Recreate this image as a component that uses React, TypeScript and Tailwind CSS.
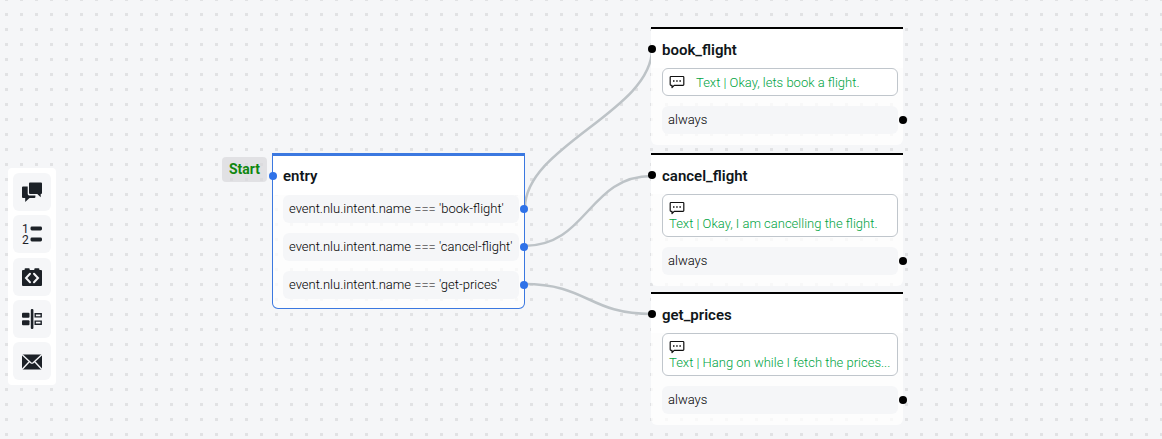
import React from 'react';

type Tone = 'black' | 'blue';
type Side = 'in' | 'out';

function Port({ tone, side }: { tone: Tone; side: Side }) {
  const color = tone === 'blue' ? 'bg-[#2f72e8]' : 'bg-black';
  const inPlace = tone === 'blue' ? '-left-1 top-4' : '-left-[3px] top-4';
  const place = side === 'in' ? inPlace : '-right-[9px] top-2.5';
  return <span aria-hidden="true" className={`absolute size-2 rounded-full ${color} ${place}`} />;
}

function Transition({ label, tone }: { label: string; tone: Tone }) {
  return (
    <li className="relative h-7 rounded-md bg-[#f5f6f8] px-1.5 text-[13px] leading-7 font-light whitespace-nowrap text-black">
      {label}
      <Port tone={tone} side="out" />
    </li>
  );
}

function SpeechIcon() {
  return (
    <svg width="16" height="14" viewBox="0 0 16 14" fill="none" className="shrink-0" aria-hidden="true">
      <path
        d="M2 1.500h12q.8 0 .8.8v7.200q0 .8-.8.8H5.200L3 12.600v-2.300H2q-.8 0-.8-.8V2.300q0-.8.8-.8Z"
        stroke="#111"
        strokeWidth="1.200"
        strokeLinejoin="round"
      />
      <path d="M4 5.200h1.500v1.500H4zM7.200 5.200h1.500v1.500H7.200zM10.400 5.200h1.500v1.500h-1.500z" fill="#111" />
    </svg>
  );
}

function Message({ text, stacked }: { text: string; stacked: boolean }) {
  return (
    <div
      className={
        stacked
          ? 'flex h-[43px] flex-col gap-px rounded-md border border-[#c0c6cc] bg-white px-1.5 pt-1.5'
          : 'flex h-7 gap-[11px] rounded-md border border-[#c0c6cc] bg-white px-1.5 pt-1.5'
      }
    >
      <SpeechIcon />
      <span className="text-[13px] leading-4 font-light whitespace-nowrap text-[#00a342]">{text}</span>
    </div>
  );
}

function StepNode({ title, text, stacked, place }: { title: string; text: string; stacked: boolean; place: string }) {
  return (
    <section className={`absolute left-[651px] w-[252px] rounded-b-md border-t-2 border-black bg-white/75 ${place}`}>
      <h2 className="h-[39px] bg-white px-[11px] pt-[11px] text-[15px] leading-5 font-semibold text-[#10161a]">
        {title}
      </h2>
      <Port tone="black" side="in" />
      <div className="flex flex-col gap-2.5 pr-[5px] pb-[11px] pl-[11px]">
        <Message text={text} stacked={stacked} />
        <ul>
          <Transition label="always" tone="black" />
        </ul>
      </div>
    </section>
  );
}

const tools: { label: string; icon: React.ReactNode }[] = [
  {
    label: 'Say something',
    icon: (
      <>
        <path d="M8 .5h11q1 0 1 1V11q0 1-1 1h-.300v3.200L15.300 12H8q-1 0-1-1V1.500q0-1 1-1Z" />
        <path d="M1 4.500h4.700V12q0 1.400 1.400 1.400h6.300V15q0 1-1 1H7.500l-4.300 4v-4H1q-1 0-1-1V5.500q0-1 1-1Z" />
      </>
    ),
  },
  {
    label: 'Execute code',
    icon: (
      <>
        <text fontFamily="Roboto, sans-serif" fontSize="12">
          <tspan x="0" y="9">1</tspan>
          <tspan x="0" y="20">2</tspan>
        </text>
        <rect x="8.500" y="2.500" width="11.500" height="4" rx="1.400" />
        <rect x="8.500" y="13.500" width="11.500" height="4" rx="1.400" />
      </>
    ),
  },
  {
    label: 'Raw code',
    icon: (
      <>
        <path d="M3.500 1.200h3.300q.9 0 .9.9v1h4.600v-1q0-.9.9-.9h3.300q.9 0 .9.9v1H19q1 0 1 1V18q0 1-1 1H1q-1 0-1-1V4.100q0-1 1-1h1.600v-1q0-.9.9-.9Z" />
        <path d="M8 6.800 4 11l4 4.200M12 6.800l4 4.200-4 4.200" fill="none" stroke="#f5f6f8" strokeWidth="2" strokeLinecap="round" />
      </>
    ),
  },
  {
    label: 'Split',
    icon: (
      <>
        <rect x="8.800" y="0" width="2.600" height="20" rx="1" />
        <rect x="0" y="3.800" width="7.500" height="5" rx="1" />
        <rect x="0" y="11.200" width="7.500" height="5" rx="1" />
        <path d="M13.200 4.700h6v3.200h-6zM13.200 12.100h6v3.200h-6z" fill="none" stroke="#1c2127" strokeWidth="1.400" />
      </>
    ),
  },
  {
    label: 'Send email',
    icon: (
      <>
        <rect x="0" y="3.500" width="20" height="15" rx="1" />
        <path
          d="M0 3.500 8.800 11.700q1.200.9 2.400 0L20 3.500M0 18.500l7-7.500M20 18.500 13 11"
          fill="none"
          stroke="#f5f6f8"
          strokeWidth="1.400"
        />
      </>
    ),
  },
];

export default function App() {
  return (
    <main className="relative min-h-screen w-full overflow-hidden bg-[#f5f6f8] font-['Roboto',sans-serif] text-[#10161a]">
      <svg className="absolute inset-0 size-full" aria-hidden="true">
        <defs>
          <pattern id="grid" x="5" y="13" width="15" height="15" patternUnits="userSpaceOnUse">
            <rect width="3" height="3" fill="#e1e2e4" />
          </pattern>
        </defs>
        <rect width="100%" height="100%" fill="url(#grid)" />
        <g fill="none" stroke="#bdc3c7" strokeWidth="2.500">
          <path d="M525 208C525 146 652 111 652 49" />
          <path d="M524 246C588 246 588 176 652 176" />
          <path d="M524 284C588 284 588 314 652 314" />
        </g>
      </svg>

      <div className="relative w-fit pt-[168px] pl-2">
        <nav aria-label="Tools" className="flex h-[217px] flex-col justify-between rounded bg-white p-[5px]">
          {tools.map((tool) => (
            <button
              key={tool.label}
              type="button"
              aria-label={tool.label}
              className="flex size-[38px] items-center justify-center rounded-md bg-[#f5f6f8]"
            >
              <svg width="20" height="20" viewBox="0 0 20 20" fill="#1c2127" className="overflow-visible">
                {tool.icon}
              </svg>
            </button>
          ))}
        </nav>
      </div>

      <span className="absolute top-[157px] left-[222px] rounded bg-[#d8d9db]/70 px-[7px] text-[14px] leading-[25px] font-bold text-[#0f870f]">
        Start
      </span>

      <section className="absolute top-[153px] left-[272px] w-[253px] rounded-b-md border border-t-[3px] border-[#3b78e0] bg-white/75">
        <h2 className="h-[39px] bg-white px-2.5 pt-2.5 text-[15px] leading-5 font-semibold">entry</h2>
        <Port tone="blue" side="in" />
        <ul className="flex flex-col gap-2.5 pr-[5px] pb-[9px] pl-2.5">
          <Transition label="event.nlu.intent.name === 'book-flight'" tone="blue" />
          <Transition label="event.nlu.intent.name === 'cancel-flight'" tone="blue" />
          <Transition label="event.nlu.intent.name === 'get-prices'" tone="blue" />
        </ul>
      </section>

      <StepNode title="book_flight" text="Text | Okay, lets book a flight." stacked={false} place="top-[27px]" />
      <StepNode title="cancel_flight" text="Text | Okay, I am cancelling the flight." stacked place="top-[153px]" />
      <StepNode title="get_prices" text="Text | Hang on while I fetch the prices..." stacked place="top-[292px]" />
    </main>
  );
}
